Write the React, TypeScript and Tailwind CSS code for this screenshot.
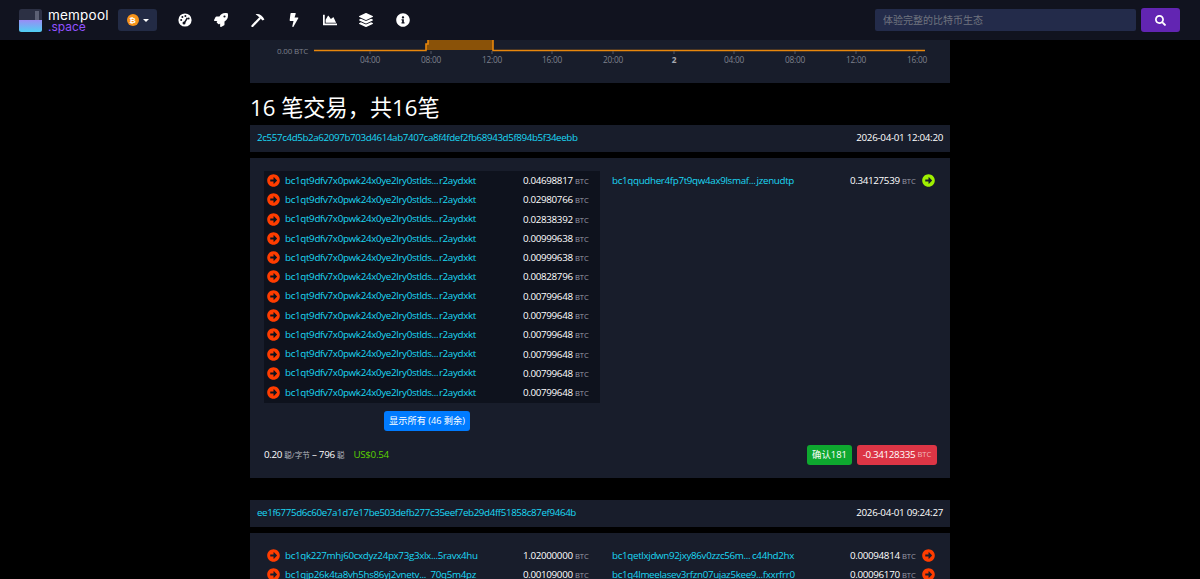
import {
  FaArrowAltCircleRight,
  FaBolt,
  FaChartArea,
  FaInfoCircle,
  FaLayerGroup,
  FaRocket,
  FaSearch,
} from "react-icons/fa";

const sans = "[font-family:'Open_Sans','Noto_Sans_CJK_SC',sans-serif]";

const firstInputs = [
  "0.04698817",
  "0.02980766",
  "0.02838392",
  "0.00999638",
  "0.00999638",
  "0.00828796",
  "0.00799648",
  "0.00799648",
  "0.00799648",
  "0.00799648",
  "0.00799648",
  "0.00799648",
];

function GaugeIcon() {
  return (
    <svg viewBox="0 0 14 14" className="w-[14px] h-[14px]">
      <circle cx="7" cy="7" r="6.6" fill="#fff" />
      <circle cx="3.2" cy="7" r="1" fill="#11131f" />
      <circle cx="4.4" cy="4" r="1" fill="#11131f" />
      <circle cx="7.4" cy="2.9" r="1" fill="#11131f" />
      <circle cx="10.6" cy="5.4" r="1" fill="#11131f" />
      <path d="M6 10.4L9.4 4.8" stroke="#11131f" strokeWidth="1.6" />
      <circle cx="6" cy="10" r="1.5" fill="#11131f" />
    </svg>
  );
}

function PickIcon() {
  return (
    <svg viewBox="0 0 14 14" className="w-[14px] h-[14px]">
      <path d="M1.4 13L8.6 5.4" stroke="#fff" strokeWidth="2.2" strokeLinecap="round" />
      <path d="M4.6 1.2C8 .4 11.6 2.4 13.4 6.6L11.6 7.4L6.6 2.8Z" fill="#fff" />
    </svg>
  );
}

const navIcons = [
  <GaugeIcon key="gauge" />,
  <FaRocket key="rocket" className="w-[14px] h-[14px] text-white" />,
  <PickIcon key="pick" />,
  <FaBolt key="bolt" className="w-[14px] h-[14px] text-white" />,
  <FaChartArea key="chart" className="w-[14px] h-[14px] text-white" />,
  <FaLayerGroup key="layers" className="w-[14px] h-[14px] text-white" />,
  <FaInfoCircle key="info" className="w-[14px] h-[14px] text-white" />,
];

function Address({ head, tail, wide }: { head: string; tail: string; wide?: boolean }) {
  return (
    <a className={`flex justify-between pt-px text-[#1bd8f4] text-[9.8px] tracking-[-0.33px] ${wide ? "w-[182px]" : "w-[191px]"}`}>
      <span>{head}</span>
      <span>{tail}</span>
    </a>
  );
}

function Amount({ value }: { value: string }) {
  return (
    <div className="pt-px text-[9.8px] tracking-[-0.33px] leading-[14px] text-white whitespace-nowrap">
      {value} <span className="text-[7.6px] tracking-normal text-[#9a9ca6]">BTC</span>
    </div>
  );
}

function InputRow({ head, tail, value }: { head: string; tail: string; value: string }) {
  return (
    <div className="flex items-center h-[19.27px]">
      <FaArrowAltCircleRight className="shrink-0 ml-[3px] w-[13px] h-[13px] text-[#ff3d00]" />
      <div className="ml-[5px]">
        <Address head={head} tail={tail} />
      </div>
      <div className="ml-[47px]">
        <Amount value={value} />
      </div>
    </div>
  );
}

function OutputRow({ head, tail, value, color }: { head: string; tail: string; value: string; color: string }) {
  return (
    <div className="flex items-center h-[19.27px]">
      <Address head={head} tail={tail} wide />
      <div className="ml-[56px] w-[72px]">
        <Amount value={value} />
      </div>
      <FaArrowAltCircleRight className={`shrink-0 w-[13px] h-[13px] ${color}`} />
    </div>
  );
}

function TxHeader({ hash, time }: { hash: string; time: string }) {
  return (
    <div className="flex items-center justify-between h-[27px] px-[7px] bg-[#181d2b] text-[9.8px] tracking-[-0.39px]">
      <a className="text-[#1bd8f4]">{hash}</a>
      <span className="text-white tracking-[-0.3px]">{time}</span>
    </div>
  );
}

function Chart() {
  const labels: [number, string][] = [
    [370, "04:00"],
    [431, "08:00"],
    [492, "12:00"],
    [552, "16:00"],
    [613, "20:00"],
    [674, "2"],
    [734, "04:00"],
    [795, "08:00"],
    [856, "12:00"],
    [917, "16:00"],
  ];
  return (
    <svg width="700" height="43" viewBox="250 40 700 43" className="block">
      <path d="M426 50V44H428V40H493V50Z" fill="#8a5208" />
      <path d="M314 50.5H426V44H428V40M493 40V50.5H925" fill="none" stroke="#e8870c" strokeWidth="1.6" />
      <text x="308" y="54" textAnchor="end" fontSize="8" letterSpacing="-0.2" fill="#7d808c" fontFamily="Open Sans">
        0.00 BTC
      </text>
      {labels.map(([x, t]) => (
        <g key={x}>
          <path d={`M${x} 51V54`} stroke="#555a68" />
          <text x={x} y="63" textAnchor="middle" fontSize="8.3" letterSpacing="-0.2" fill={t === "2" ? "#a5a7b0" : "#7d808c"} fontWeight={t === "2" ? 700 : 400} fontFamily="Open Sans">
            {t}
          </text>
        </g>
      ))}
    </svg>
  );
}

export default function App() {
  return (
    <div className={`h-screen overflow-hidden bg-black flex flex-col ${sans}`}>
      <header className="flex items-center h-10 shrink-0 bg-[#11131f] pl-[19px]">
        <svg width="23" height="23" viewBox="0 0 23 23" className="shrink-0">
          <defs>
            <linearGradient id="logoFill" x1="0" y1="0" x2="0" y2="1">
              <stop offset="0" stopColor="#9a8cf5" />
              <stop offset="1" stopColor="#4fd0f2" />
            </linearGradient>
          </defs>
          <rect width="23" height="23" rx="2.5" fill="#2c3044" />
          <rect x="16" y="2" width="4" height="10" fill="#5c6074" />
          <path d="M0 11H23V20.5A2.5 2.5 0 0 1 20.5 23H2.5A2.5 2.5 0 0 1 0 20.5Z" fill="url(#logoFill)" />
        </svg>
        <div className="ml-[6px] mt-[2px] w-[64px] flex flex-col gap-[2px] font-['Inter',sans-serif] text-[13.5px] leading-[10px] font-normal">
          <span className="text-white tracking-[0.2px]">mempool</span>
          <span className="text-[#9352ff] text-[12px]">.space</span>
        </div>
        <button className="ml-[6px] flex items-center justify-center gap-[4px] w-[39px] h-[22px] rounded-[3px] bg-[#232b45]">
          <span className="flex items-center justify-center w-[12px] h-[12px] rounded-full bg-[#f7931a] text-white text-[8px] font-bold">
            ₿
          </span>
          <span className="w-0 h-0 border-x-[3px] border-x-transparent border-t-[3px] border-t-white" />
        </button>
        <nav className="ml-[21px] flex items-center gap-[22.3px]">{navIcons}</nav>
        <div className="ml-auto flex items-center pr-[20px]">
          <input
            readOnly
            placeholder="体验完整的比特币生态"
            className="w-[261px] h-[22px] rounded-[2px] bg-[#232b4a] px-2 text-[10px] placeholder:text-[#70747f] outline-none"
          />
          <button className="ml-[5px] flex items-center justify-center w-[39px] h-6 rounded-[3px] bg-[#6225b2]">
            <FaSearch className="w-[11px] h-[11px] text-white" />
          </button>
        </div>
      </header>

      <main className="w-[700px] mx-auto">
        <div className="h-[43px] bg-[#181d2b]">
          <Chart />
        </div>
        <h2 className="mt-[10px] h-[32px] text-[22.2px] leading-[30px] text-white">16 笔交易，共16笔</h2>
        <TxHeader hash="2c557c4d5b2a62097b703d4614ab7407ca8f4fdef2fb68943d5f894b5f34eebb" time="2026-04-01 12:04:20" />

        <section className="mt-[6px] h-[320px] bg-[#181d2b] pl-[14px] pr-[13px] pt-[13px]">
          <div className="grid grid-cols-[336px_325px] gap-x-[12px]">
            <div className="bg-[#0e121d] h-[232px]">
              {firstInputs.map((v, i) => (
                <InputRow key={i} head="bc1qt9dfv7x0pwk24x0ye2lry0stlds..." tail="r2aydxkt" value={v} />
              ))}
            </div>
            <div>
              <OutputRow head="bc1qqudher4fp7t9qw4ax9lsmaf..." tail="jzenudtp" value="0.34127539" color="text-[#9ff000]" />
            </div>
          </div>
          <div className="flex mt-[8px] pl-[120px]">
            <button className="h-5 w-[86px] rounded-[3px] bg-[#007bff] text-white text-[9.2px]">显示所有 (46 剩余)</button>
          </div>
          <div className="flex items-center justify-between mt-[14px] h-5">
            <div className="text-[9.8px] tracking-[-0.33px] text-white">
              0.20 <span className="text-[7.6px] tracking-normal text-[#b5b7bf]">聪/字节</span> – 796 <span className="text-[7.6px] tracking-normal text-[#b5b7bf]">聪</span>
              <span className="ml-[9px] text-[#5bd000]">US$0.54</span>
            </div>
            <div className="flex items-center gap-[5px]">
              <span className="flex items-center justify-center h-5 w-[45px] rounded-[3px] bg-[#0ea82f] text-white text-[9.4px]">确认181</span>
              <span className="flex items-center justify-center h-5 w-[80px] rounded-[3px] bg-[#dc3545] text-white text-[9.8px] tracking-[-0.33px] whitespace-nowrap">
                -0.34128335&nbsp;<span className="text-[7.6px] tracking-normal text-[#f0b5bb]">BTC</span>
              </span>
            </div>
          </div>
        </section>

        <div className="mt-[22px]">
          <TxHeader hash="ee1f6775d6c60e7a1d7e17be503defb277c35eef7eb29d4ff51858c87ef9464b" time="2026-04-01 09:24:27" />
        </div>

        <section className="mt-[6px] h-[46px] overflow-hidden bg-[#181d2b] pl-[14px] pr-[13px] pt-[13px]">
          <div className="grid grid-cols-[336px_325px] gap-x-[12px]">
            <div>
              <InputRow head="bc1qk227mhj60cxdyz24px73g3xlx..." tail="5ravx4hu" value="1.02000000" />
              <InputRow head="bc1qjp26k4ta8vh5hs86yj2vnetv..." tail="70q5m4pz" value="0.00109000" />
            </div>
            <div>
              <OutputRow head="bc1qetlxjdwn92jxy86v0zzc56m..." tail="c44hd2hx" value="0.00094814" color="text-[#ff3d00]" />
              <OutputRow head="bc1q4lmeelasev3rfzn07ujaz5kee9..." tail="fxxrfrr0" value="0.00096170" color="text-[#ff3d00]" />
            </div>
          </div>
        </section>
      </main>
    </div>
  );
}
